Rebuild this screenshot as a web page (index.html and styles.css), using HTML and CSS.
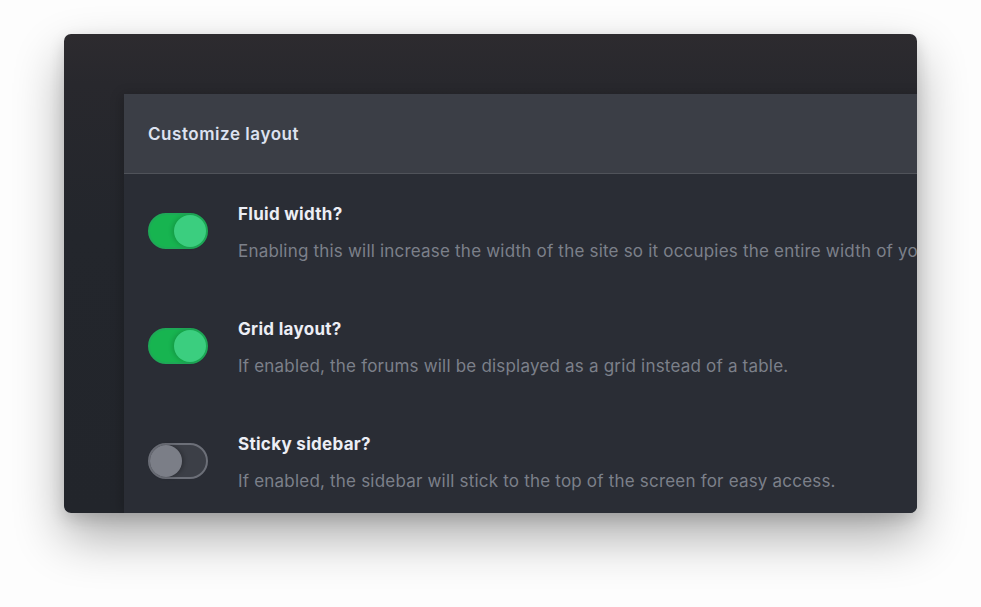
FILE: index.html
```html
<!DOCTYPE html>
<html>
<head>
<meta charset="utf-8">
<link rel="stylesheet" href="styles.css">
</head>
<body>
<div class="stage">
  <div class="window">
    <div class="panel">
      <div class="panel-header">Customize layout</div>
      <div class="panel-body">
        <div class="row">
          <div class="toggle on"><span class="knob"></span></div>
          <div class="text">
            <div class="label">Fluid width?</div>
            <div class="desc">Enabling this will increase the width of the site so it occupies the entire width of your screen.</div>
          </div>
        </div>
        <div class="row">
          <div class="toggle on"><span class="knob"></span></div>
          <div class="text">
            <div class="label">Grid layout?</div>
            <div class="desc">If enabled, the forums will be displayed as a grid instead of a table.</div>
          </div>
        </div>
        <div class="row">
          <div class="toggle"><span class="knob"></span></div>
          <div class="text">
            <div class="label">Sticky sidebar?</div>
            <div class="desc">If enabled, the sidebar will stick to the top of the screen for easy access.</div>
          </div>
        </div>
      </div>
    </div>
  </div>
</div>
</body>
</html>
```
FILE: styles.css
```css
* { box-sizing: border-box; }
html, body { margin: 0; padding: 0; background: #fdfdfd; }
body { font-family: Inter, "Noto Sans", sans-serif; -webkit-font-smoothing: antialiased; }
.stage {
  width: 981px;
  height: 607px;
  padding: 34px 64px 0 64px;
  overflow: hidden;
}
.window {
  width: 853px;
  height: 479px;
  border-radius: 7px;
  overflow: hidden;
  background: linear-gradient(to bottom, #2d2b2f 0px, #28282d 50px, #23262c 200px, #22252b 100%);
  box-shadow: 0 24px 50px rgba(0,0,0,0.32), 0 6px 16px rgba(0,0,0,0.14);
  padding: 60px 0 0 60px;
  display: flex;
}
.panel {
  flex: 0 0 920px;
  background: #2a2d35;
  border-top-left-radius: 4px;
  box-shadow: -3px 0 12px rgba(0,0,0,0.18);
}
.panel-header {
  height: 80px;
  background: #3b3e46;
  border-bottom: 1px solid #50535a;
  padding: 0 24px;
  display: flex;
  align-items: center;
  font-size: 17px;
  font-weight: 600;
  letter-spacing: 0.55px;
  color: #dde2f0;
}
.panel-body { padding: 0 24px; }
.row {
  display: flex;
  gap: 30px;
  height: 115px;
  padding-top: 28px;
}
.toggle {
  flex: 0 0 60px;
  height: 36px;
  margin-top: 11px;
  border-radius: 18px;
  background: #3c3f47;
  border: 2px solid #6c6f78;
  position: relative;
}
.toggle .knob {
  position: absolute;
  left: 0;
  top: 0;
  width: 32px;
  height: 32px;
  border-radius: 50%;
  background: #7b7e87;
  box-shadow: 2px 0 4px rgba(0,0,0,0.25);
}
.toggle.on {
  background: #17b450;
  border-color: #1ea957;
}
.toggle.on .knob {
  left: auto;
  right: 0;
  background: #3bce7f;
  box-shadow: -2px 0 4px rgba(0,0,0,0.15);
}
.text { white-space: nowrap; }
.label {
  font-size: 17px;
  line-height: 24px;
  font-weight: 700;
  letter-spacing: 0.3px;
  color: #eceef5;
}
.desc {
  margin-top: 13px;
  font-size: 17px;
  line-height: 24px;
  letter-spacing: 0.2px;
  color: #7c808a;
}
```
